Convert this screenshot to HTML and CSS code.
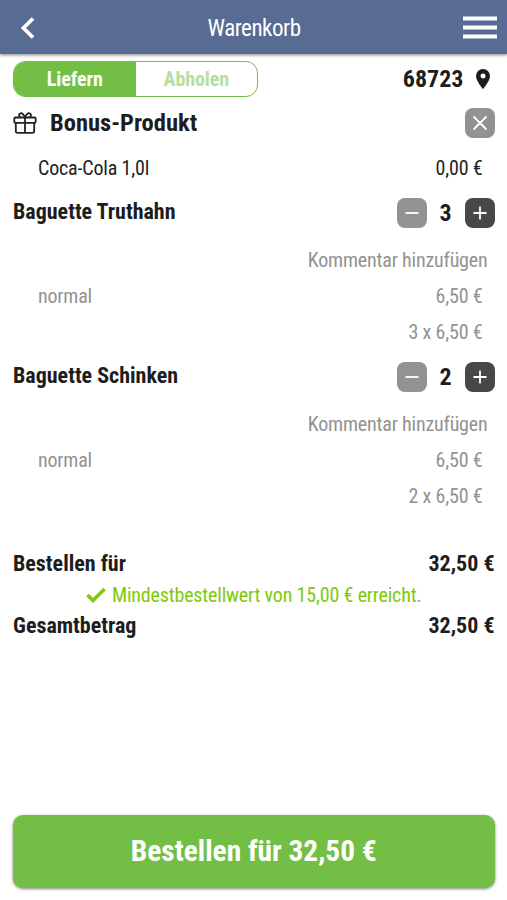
FILE: index.html
```html
<!DOCTYPE html>
<html lang="de">
<head>
<meta charset="utf-8">
<title>Warenkorb</title>
<link rel="stylesheet" href="styles.css">
</head>
<body>
<header class="topbar">
  <svg class="back" viewBox="0 0 16 24"><path d="M13 2.5 3.5 12 13 21.5" fill="none" stroke="#fff" stroke-width="3.8"/></svg>
  <h1 class="title">Warenkorb</h1>
  <svg class="menu" viewBox="0 0 34 24"><path d="M0 2.5h34M0 11.5h34M0 20.5h34" stroke="#fff" stroke-width="4"/></svg>
</header>
<main class="cart">
  <div class="delivery">
    <div class="toggle"><span class="option active">Liefern</span><span class="option">Abholen</span></div>
    <div class="place"><span>68723</span><svg class="pin" viewBox="0 0 14 20"><path fill="#1d1d1d" fill-rule="evenodd" d="M7 0a7 7 0 0 0-7 7c0 5 7 13 7 13s7-8 7-13a7 7 0 0 0-7-7zm0 4.5a2.5 2.5 0 1 1 0 5 2.5 2.5 0 0 1 0-5z"/></svg></div>
  </div>
  <div class="bonus">
    <svg class="gift" viewBox="0 0 24 22"><g fill="none" stroke="#222" stroke-width="1.8"><rect x="1.3" y="5.5" width="21.4" height="5.3" rx="1"/><path d="M2.8 11v8q0 1.8 1.8 1.8h14.8q1.8 0 1.8-1.8v-8M12 5.5v15.3M12 5.5C10.5 1.5 8.5.8 7.3 1.3 5.5 2 5.7 4.5 7.5 5.5M12 5.5C13.5 1.5 15.5.8 16.7 1.3c1.8.7 1.6 3.2-.2 4.2"/></g></svg>
    <h2 class="bonus-title">Bonus-Produkt</h2>
    <button class="square gray" aria-label="Entfernen"><svg viewBox="0 0 30 30"><path d="m8.5 8.5 13 13m0-13-13 13"/></svg></button>
  </div>
  <div class="line dark"><span>Coca-Cola 1,0l</span><span>0,00 €</span></div>
  <section class="item">
    <div class="item-head"><h3 class="name">Baguette Truthahn</h3><div class="stepper">
      <button class="square gray" aria-label="Weniger"><svg viewBox="0 0 30 30"><path d="M8.5 15h13"/></svg></button>
      <span class="count">3</span>
      <button class="square" aria-label="Mehr"><svg viewBox="0 0 30 30"><path d="M8.5 15h13M15 8.5v13"/></svg></button></div></div>
    <div class="comment">Kommentar hinzufügen</div>
    <div class="line"><span>normal</span><span>6,50 €</span></div>
    <div class="line end"><span>3 x 6,50 €</span></div>
  </section>
  <section class="item">
    <div class="item-head"><h3 class="name">Baguette Schinken</h3><div class="stepper">
      <button class="square gray" aria-label="Weniger"><svg viewBox="0 0 30 30"><path d="M8.5 15h13"/></svg></button>
      <span class="count">2</span>
      <button class="square" aria-label="Mehr"><svg viewBox="0 0 30 30"><path d="M8.5 15h13M15 8.5v13"/></svg></button></div></div>
    <div class="comment">Kommentar hinzufügen</div>
    <div class="line"><span>normal</span><span>6,50 €</span></div>
    <div class="line end"><span>2 x 6,50 €</span></div>
  </section>
  <section class="totals">
    <div class="total"><span>Bestellen für</span><span>32,50 €</span></div>
    <div class="minimum"><svg class="check" viewBox="0 0 20 16"><path d="m1.5 8 5.5 5.5L18.5 2" fill="none" stroke="#80c90a" stroke-width="3.6"/></svg><span>Mindestbestellwert von 15,00 € erreicht.</span></div>
    <div class="total"><span>Gesamtbetrag</span><span>32,50 €</span></div>
  </section>
  <button class="order">Bestellen für 32,50 €</button>
</main>
</body>
</html>
```

FILE: styles.css
```css
* { box-sizing: border-box; }
body {
  margin: 0;
  height: 900px;
  display: flex;
  flex-direction: column;
  background: #fff;
  color: #1d1d1d;
  font-family: "Roboto Condensed", Roboto, sans-serif;
  font-stretch: 75%;
  font-size: 20px;
}
h1, h2, h3 { margin: 0; }
button { border: 0; padding: 0; font: inherit; }
svg { display: block; }
.topbar {
  height: 54px;
  flex: none;
  display: grid;
  grid-template-columns: 34px 1fr 34px;
  align-items: center;
  padding: 2px 10px 0 20px;
  background: #586b93;
  color: #fff;
  box-shadow: 0 1px 3px rgba(0, 0, 0, .5);
}
.back { width: 16px; height: 24px; }
.menu { width: 34px; height: 24px; }
.title { font-size: 23px; font-weight: 400; letter-spacing: -.45px; text-align: center; padding-right: 9px; }
.cart { flex: 1; display: flex; flex-direction: column; padding: 7px 12.5px 12px 13px; }
.delivery { display: flex; justify-content: space-between; height: 36px; }
.toggle {
  width: 245px;
  display: grid;
  grid-template-columns: 1fr 1fr;
  border: 1px solid #73bf45;
  border-radius: 12px;
  overflow: hidden;
}
.option { display: grid; place-items: center; font-weight: 700; letter-spacing: -.1px; color: #b5dfa0; }
.active { background: #73bf45; color: #fff; }
.place { display: flex; align-items: center; gap: 12px; font-size: 24px; font-weight: 700; padding-right: 5px; }
.pin { width: 14px; height: 20px; }
.bonus { display: flex; align-items: center; height: 30px; margin-top: 11px; }
.gift { width: 24px; height: 22px; }
.bonus-title { font-size: 24.5px; line-height: 28px; margin: -1px 0 0 13px; flex: 1; }
.square { width: 30px; height: 30px; border-radius: 8px; background: #484848; }
.square.gray { background: #929292; }
.square path { stroke: #fff; stroke-width: 1.8; fill: none; }
.line { display: flex; justify-content: space-between; align-items: center; height: 36px; padding: 0 12px 0 25px; color: #929292; letter-spacing: -.18px; }
.line.dark { color: #222; height: 60px; }
.line.end { justify-content: flex-end; }
.item { height: 164px; }
.item-head { display: flex; justify-content: space-between; height: 30px; }
.name { font-size: 22px; line-height: 27px; }
.stepper { display: flex; align-items: center; }
.count { width: 38px; text-align: center; font-size: 24px; font-weight: 700; }
.comment { height: 36px; line-height: 36px; margin: 14px 7px 0 0; text-align: right; color: #929292; letter-spacing: -.18px; }
.totals { margin-top: 22px; }
.total { display: flex; justify-content: space-between; height: 31px; line-height: 31px; font-size: 22px; font-weight: 700; }
.minimum { display: flex; justify-content: center; align-items: center; gap: 6px; height: 31px; color: #80c90a; letter-spacing: -.18px; }
.check { width: 20px; height: 16px; }
.order {
  height: 73px;
  margin-top: auto;
  padding-bottom: 2px;
  border-radius: 10px;
  background: #73bf45;
  color: #fff;
  font-size: 29.4px;
  font-weight: 700;
  box-shadow: 0 1px 3px rgba(0, 0, 0, .5);
}
```
